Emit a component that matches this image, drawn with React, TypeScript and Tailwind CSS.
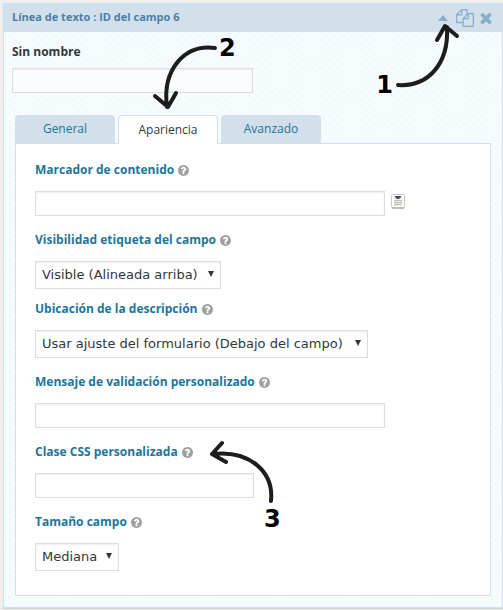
import { useState } from 'react';
import type { ReactNode } from 'react';

const TABS = ['General', 'Apariencia', 'Avanzado'];

const INPUT = 'block h-[25px] max-w-full border border-[#dddddd] px-1 text-[13px] text-[#32373c] shadow-[inset_0_1px_2px_rgba(0,0,0,0.07)] outline-none';

export default function App() {
  const [tab, setTab] = useState('Apariencia');

  return (
    <div className="relative bg-[#eeeeee] pt-[3px] pb-0.5 pl-[3px] font-['Open_Sans','Noto_Sans',sans-serif] text-[13px]">
      <section className="border border-t-0 border-[#d2e0eb] bg-[#f6fbfd] bg-[radial-gradient(circle_at_2px_2px,#f0f6fa_1px,transparent_1px),radial-gradient(circle_at_6px_5px,#f0f6fa_1px,transparent_1px)] bg-[length:9px_7px] shadow-[0_1px_1px_#d0d4d6]">
        <header className="flex h-[29px] items-center justify-between bg-[#d2e0eb] pr-2.5 pl-2 text-[#89adc6]">
          <h1 className="text-[11px] font-bold text-[#4a7eaa]">Línea de texto : ID del campo 6</h1>
          <div className="flex items-center gap-1.5">
            <button type="button" aria-label="Contraer" className="mr-0.5">
              <svg viewBox="0 0 10 6" className="h-1.5 w-2.5 fill-current"><path d="M5 0 10 6H0z" /></svg>
            </button>
            <button type="button" aria-label="Duplicar campo">
              <svg viewBox="0 0 1792 1792" className="size-[18px] fill-current">
                <path d="M1696 384q40 0 68 28t28 68v1216q0 40-28 68t-68 28h-960q-40 0-68-28t-28-68v-288h-544q-40 0-68-28t-28-68v-672q0-40 20-88t48-76l408-408q28-28 76-48t88-20h416q40 0 68 28t28 68v328q68-40 128-40h416zm-544 213l-299 299h299v-299zm-640-384l-299 299h299v-299zm196 647l316-316v-416h-384v416q0 40-28 68t-68 28h-416v640h512v-256q0-40 20-88t48-76zm956 804v-1152h-384v416q0 40-28 68t-68 28h-416v640h896z" />
              </svg>
            </button>
            <button type="button" aria-label="Eliminar campo">
              <svg viewBox="256 256 1280 1280" className="size-3 fill-current">
                <path d="M1490 1322q0 40-28 68l-136 136q-28 28-68 28t-68-28l-294-294-294 294q-28 28-68 28t-68-28l-136-136q-28-28-28-68t28-68l294-294-294-294q-28-28-28-68t28-68l136-136q28-28 68-28t68 28l294 294 294-294q28-28 68-28t68 28l136 136q28 28 28 68t-28 68l-294 294 294 294q28 28 28 68z" />
              </svg>
            </button>
          </div>
        </header>

        <div className="px-2 pt-[10px] pb-[22px]">
          <label htmlFor="nombre" className="block h-5 text-[12px] leading-5 font-bold text-[#32373c]">Sin nombre</label>
          <input id="nombre" type="text" className={`${INPUT} mt-1.5 w-[241px] bg-white/60`} />
        </div>

        <div className="px-[11px] pb-[11px]">
          <div role="tablist" className="flex gap-[3px]">
            {TABS.map((t) => (
              <button
                key={t}
                type="button"
                role="tab"
                aria-selected={t === tab}
                onClick={() => setTab(t)}
                className={
                  t === tab
                    ? 'relative z-10 -mb-px h-[29px] w-[100px] rounded-t-[4px] border border-b-0 border-[#d2e0eb] bg-white pb-px text-[12px] text-[#32373c]'
                    : 'h-7 w-[100px] rounded-t-[4px] bg-[#d2e0eb] text-[12px] text-[#21759b]'
                }
              >
                {t}
              </button>
            ))}
          </div>

          <div role="tabpanel" className="flex flex-col gap-3.5 border border-[#d2e0eb] bg-white px-[19px] pt-4 pb-6">
            <Field id="marcador" label="Marcador de contenido">
              <div className="flex items-start gap-1.5">
                <input id="marcador" type="text" className={`${INPUT} w-[350px] bg-white`} />
                <button type="button" aria-label="Insertar etiqueta" className="pt-[3px]"><MergeTagIcon /></button>
              </div>
            </Field>
            <div className="flex flex-col gap-2.5">
              <Field id="visibilidad" label="Visibilidad etiqueta del campo">
                <Select id="visibilidad" width="w-[186px]" options={['Visible (Alineada arriba)', 'Oculta']} />
              </Field>
              <Field id="ubicacion" label="Ubicación de la descripción">
                <Select id="ubicacion" width="w-[333px]" options={['Usar ajuste del formulario (Debajo del campo)', 'Debajo del campo', 'Encima del campo']} />
              </Field>
            </div>
            <Field id="mensaje" label="Mensaje de validación personalizado">
              <input id="mensaje" type="text" className={`${INPUT} w-[350px] bg-white`} />
            </Field>
            <Field id="clase" label="Clase CSS personalizada">
              <input id="clase" type="text" className={`${INPUT} w-[219px] bg-white`} />
            </Field>
            <Field id="tamano" label="Tamaño campo">
              <Select id="tamano" width="w-[84px]" options={['Mediana', 'Grande']} />
            </Field>
          </div>
        </div>
      </section>

      {/* Pasos señalados sobre el formulario */}
      <Step n={1} className="top-[71px] right-[110px]" />
      <Arrow className="top-[20px] right-[42px] h-[70px] w-[66px]" box="0 0 66 70" d="M3 65C33 67 54 44 52 7M42 20 50 6 62 16" />
      <Step n={2} className="top-[34px] left-[219px]" />
      <Arrow className="top-[42px] left-[150px] h-[70px] w-[70px]" box="0 0 70 70" d="M65 6C34 2 12 28 17 65M5 54 18 65 26 51" />
      <Step n={3} className="top-[505px] left-[264px]" />
      <Arrow className="top-[438px] left-[206px] h-[70px] w-[72px]" box="0 0 72 70" d="M65 63C68 34 44 12 7 16M16 5 6 16 20 24" />
    </div>
  );
}

function Field({ id, label, children }: { id: string; label: string; children: ReactNode }) {
  return (
    <div>
      <div className="mb-[11px] flex h-5 items-center gap-1">
        <label htmlFor={id} className="text-[12px] leading-5 font-bold text-[#21759b]">{label}</label>
        <svg viewBox="128 128 1536 1536" className="size-[11px] shrink-0 fill-[#a0a0a0]">
          <path d="M1024 1376v-192q0-14-9-23t-23-9h-192q-14 0-23 9t-9 23v192q0 14 9 23t23 9h192q14 0 23-9t9-23zm256-672q0-88-55.5-163t-138.5-116-170-41q-243 0-371 213-15 24 8 42l132 100q7 6 19 6 16 0 25-12 53-68 86-92 34-24 86-24 48 0 85.5 26t37.5 59q0 38-20 61t-68 45q-63 28-115.5 86.5t-52.5 125.5v36q0 14 9 23t23 9h192q14 0 23-9t9-23q0-19 21.5-49.5t54.5-49.5q32-18 49-28.5t46-35 44.5-48 28-60.5 12.5-81zm384 192q0 209-103 385.5t-279.5 279.5-385.5 103-385.5-103-279.5-279.5-103-385.5 103-385.5 279.5-279.5 385.5-103 385.5 103 279.5 279.5 103 385.5z" />
        </svg>
      </div>
      {children}
    </div>
  );
}

function Select({ id, width, options }: { id: string; width: string; options: string[] }) {
  return (
    <div className={`relative max-w-full ${width}`}>
      <select id={id} className="block h-7 w-full appearance-none border border-[#dddddd] bg-white pl-1.5 font-['DejaVu_Sans',sans-serif] text-[13px] text-[#32373c] shadow-[inset_0_1px_2px_rgba(0,0,0,0.07)] outline-none">
        {options.map((o) => <option key={o}>{o}</option>)}
      </select>
      <svg viewBox="0 0 6 6" className="pointer-events-none absolute top-[10px] right-[7px] size-1.5 fill-[#32373c]"><path d="M0 0h6L3 6z" /></svg>
    </div>
  );
}

function MergeTagIcon() {
  return (
    <svg viewBox="0 0 14 15" className="h-[15px] w-3.5">
      <rect x="0.5" y="0.5" width="13" height="13" rx="1" fill="#fff" stroke="#c5c6bf" />
      <path d="M1 14h12" stroke="#bdbeb6" strokeWidth="2" />
      <path d="M3 2h8v10H3z" fill="#ececec" />
      <path d="M4 2h6v1L8 5H6L4 3z" fill="#4c4a5e" />
      <path d="M3 6.5h8M3 8.5h8M3 10.5h8" stroke="#bdbeb6" />
    </svg>
  );
}

function Step({ n, className }: { n: number; className: string }) {
  return (
    <span className={`pointer-events-none absolute z-20 font-['DejaVu_Sans',sans-serif] text-[24px] leading-7 font-bold text-black ${className}`}>{n}</span>
  );
}

function Arrow({ box, d, className }: { box: string; d: string; className: string }) {
  return (
    <svg viewBox={box} className={`pointer-events-none absolute z-20 ${className}`}>
      <path d={d} fill="none" stroke="#1d1d1b" strokeWidth="4" strokeLinecap="round" strokeLinejoin="round" />
    </svg>
  );
}
